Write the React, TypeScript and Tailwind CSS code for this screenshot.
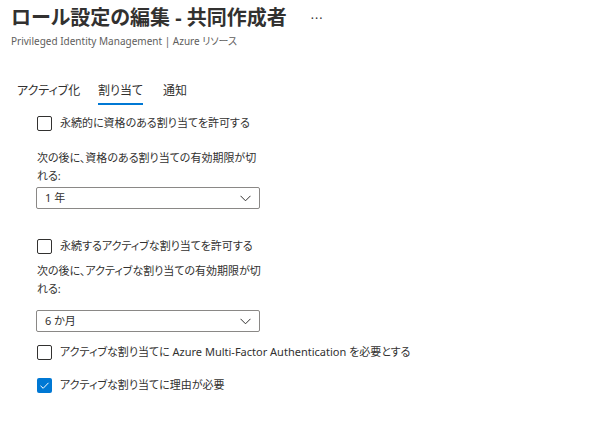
import React from "react";

const font = "font-['Noto_Sans','Noto_Sans_CJK_JP',sans-serif] [font-feature-settings:'palt']";

function Checkbox({ checked, label }: { checked?: boolean; label: string }) {
  return (
    <div className="flex items-center h-[16px]">
      {checked ? (
        <div className="w-[15px] h-[15px] rounded-[2px] bg-[#0078d4] flex items-center justify-center">
          <svg width="11" height="11" viewBox="0 0 11 11" fill="none">
            <path d="M1.5 5.8 L4.2 8.3 L9.5 2.8" stroke="white" strokeWidth="1" />
          </svg>
        </div>
      ) : (
        <div className="w-[15px] h-[15px] rounded-[2px] border border-[#323130]" />
      )}
      <span className="ml-[8px] text-[11px] leading-[16px] text-[#323130]">{label}</span>
    </div>
  );
}

function Dropdown({ value }: { value: string }) {
  return (
    <div className="w-[224px] h-[22px] border border-[#8a8886] rounded-[2px] flex items-center justify-between pl-[8px] pr-[8px]">
      <span className="text-[11px] leading-[16px] text-[#323130]">{value}</span>
      <svg width="11" height="7" viewBox="0 0 11 7" fill="none">
        <path d="M0.5 0.8 L5.5 5.8 L10.5 0.8" stroke="#323130" strokeWidth="1" />
      </svg>
    </div>
  );
}

export default function App() {
  return (
    <div className={`w-[597px] h-[424px] bg-white overflow-hidden ${font}`}>
      <div className="pl-[11px] pt-[4px] h-[48px]">
        <div className="flex items-center h-[28px]">
          <h1 className="text-[20px] leading-[28px] font-bold text-[#323130]">ロール設定の編集 - 共同作成者</h1>
          <span className="ml-[24px] text-[12px] text-[#323130] tracking-[1px] mt-[2px]">···</span>
        </div>
        <div className="text-[10px] leading-[14px] text-[#605e5c] mt-[2px]">
          Privileged Identity Management | Azure リソース
        </div>
      </div>

      <div className="flex pl-[17px] mt-[29px] text-[12px] text-[#323130]">
        <div className="h-[28px] w-[81px] flex items-center">アクティブ化</div>
        <div className="h-[28px] w-[65px] flex items-center">
          <span className="relative h-full flex items-center">
            割り当て
            <span className="absolute left-0 right-0 bottom-0 h-[2px] bg-[#0078d4]" />
          </span>
        </div>
        <div className="h-[28px] flex items-center">通知</div>
      </div>

      <div className="pl-[37px] flex flex-col">
        <div className="mt-[10px]">
          <Checkbox label="永続的に資格のある割り当てを許可する" />
        </div>
        <div className="mt-[18px] w-[224px] text-[11px] leading-[18px] text-[#323130]">
          次の後に、資格のある割り当ての有効期限が切れる:
        </div>
        <div className="mt-[2px] -ml-[1px]">
          <Dropdown value="1 年" />
        </div>
        <div className="mt-[29px]">
          <Checkbox label="永続するアクティブな割り当てを許可する" />
        </div>
        <div className="mt-[8px] w-[224px] text-[11px] leading-[18px] text-[#323130]">
          次の後に、アクティブな割り当ての有効期限が切れる:
        </div>
        <div className="mt-[12px] -ml-[1px]">
          <Dropdown value="6 か月" />
        </div>
        <div className="mt-[12px]">
          <Checkbox label="アクティブな割り当てに Azure Multi-Factor Authentication を必要とする" />
        </div>
        <div className="mt-[17px]">
          <Checkbox checked label="アクティブな割り当てに理由が必要" />
        </div>
      </div>
    </div>
  );
}
